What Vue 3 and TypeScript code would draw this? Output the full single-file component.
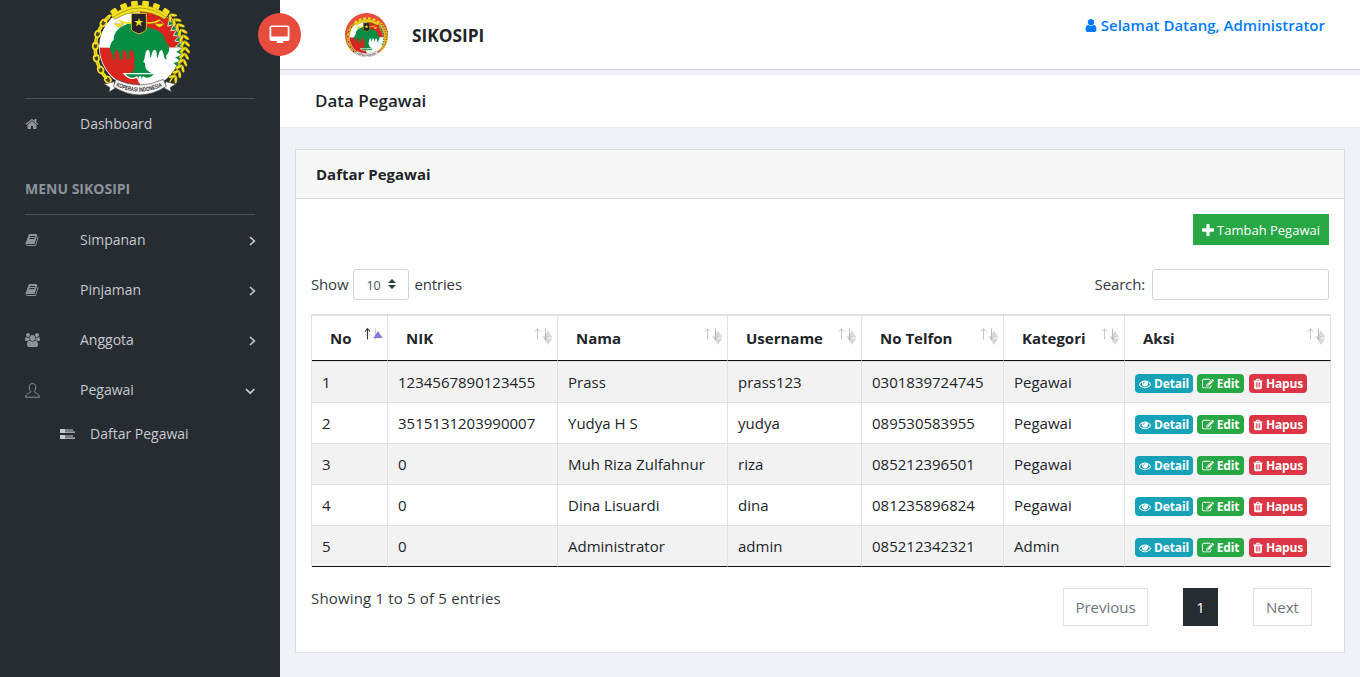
<script setup lang="ts">
interface Employee {
  no: number
  nik: string
  nama: string
  username: string
  telfon: string
  kategori: string
}

const columns: string[] = ['No', 'NIK', 'Nama', 'Username', 'No Telfon', 'Kategori', 'Aksi']

const employees: Employee[] = [
  { no: 1, nik: '1234567890123455', nama: 'Prass', username: 'prass123', telfon: '0301839724745', kategori: 'Pegawai' },
  { no: 2, nik: '3515131203990007', nama: 'Yudya H S', username: 'yudya', telfon: '089530583955', kategori: 'Pegawai' },
  { no: 3, nik: '0', nama: 'Muh Riza Zulfahnur', username: 'riza', telfon: '085212396501', kategori: 'Pegawai' },
  { no: 4, nik: '0', nama: 'Dina Lisuardi', username: 'dina', telfon: '081235896824', kategori: 'Pegawai' },
  { no: 5, nik: '0', nama: 'Administrator', username: 'admin', telfon: '085212342321', kategori: 'Admin' },
]

const icons = {
  home: 'M1472 992v480q0 26-19 45t-45 19h-384v-384h-256v384h-384q-26 0-45-19t-19-45v-480q0-1 .5-3t.5-3l575-474 575 474q1 2 1 6zm223-69l-62 74q-8 9-21 11h-3q-13 0-21-7l-692-577-692 577q-12 8-24 7-13-2-21-11l-62-74q-8-10-7-23.5t11-21.5l719-599q32-26 76-26t76 26l244 204v-195q0-14 9-23t23-9h192q14 0 23 9t9 23v408l219 182q10 8 11 21.5t-7 23.5z',
  book: 'M1703 478q40 57 18 129l-275 906q-19 64-76.5 107.5t-122.5 43.5h-923q-77 0-148.5-53.5t-99.5-131.5q-24-67-2-127 0-4 3-27t4-37q1-8-3-21.5t-3-19.5q2-11 8-21t16.5-23.5 16.5-23.5q23-38 45-91.5t30-91.5q3-10 .5-30t-.5-28q3-11 17-28t17-23q21-36 42-92t25-90q1-9-2.5-32t.5-28q4-13 22-30.5t22-22.5q19-26 42.5-84.5t27.5-96.5q1-8-3-25.5t-2-26.5q2-8 9-18t18-23 17-21q8-12 16.5-30.5t15-35 16-36 19.5-32 26.5-23.5 36-11.5 47.5 5.5l-1 3q38-9 51-9h761q74 0 114 56t18 130l-274 906q-36 119-71.500 153.500t-128.500 34.500h-869q-27 0-38 15-11 16-1 43 24 70 144 70h923q29 0 56-15.500t35-41.500l300-987q7-22 5-57 38 15 59 43zm-1064 2q-4 13 2 22.500t20 9.500h608q13 0 25.500-9.500t16.500-22.500l21-64q4-13-2-22.500t-20-9.500h-608q-13 0-25.500 9.500t-16.500 22.500zm-83 256q-4 13 2 22.500t20 9.500h608q13 0 25.500-9.500t16.500-22.500l21-64q4-13-2-22.500t-20-9.500h-608q-13 0-25.500 9.500t-16.500 22.500z',
  users: 'M529 896q-162 5-265 128h-134q-82 0-138-40.5t-56-118.500q0-353 124-353 6 0 43.500 21t97.500 42.500 119 21.500q67 0 133-23-5 37-5 66 0 139 81 256zm1071 637q0 120-73 189.500t-194 69.500h-874q-121 0-194-69.500t-73-189.500q0-53 3.500-103.500t14-109 26.500-108.500 43-97.500 62-81 85.500-53.500 111.500-20q10 0 43 21.500t73 48 107 48 135 21.500 135-21.500 107-48 73-48 43-21.500q61 0 111.500 20t85.500 53.500 62 81 43 97.500 26.500 108.500 14 109 3.500 103.500zm-1024-1277q0 106-75 181t-181 75-181-75-75-181 75-181 181-75 181 75 75 181zm704 384q0 159-112.500 271.500t-271.500 112.500-271.500-112.500-112.500-271.500 112.500-271.500 271.500-112.500 271.500 112.500 112.500 271.500zm576 225q0 78-56 118.500t-138 40.500h-134q-103-123-265-128 81-117 81-256 0-29-5-66 66 23 133 23 59 0 119-21.500t97.500-42.500 43.500-21q124 0 124 353zm-128-609q0 106-75 181t-181 75-181-75-75-181 75-181 181-75 181 75 75 181z',
  user: 'M1536 1399q0 109-62.500 187t-150.500 78h-854q-88 0-150.500-78t-62.500-187q0-85 8.500-160.500t31.500-152 58.500-131 94-89 134.500-34.500q131 128 313 128t313-128q76 0 134.500 34.500t94 89 58.500 131 31.500 152 8.500 160.500zm-256-887q0 159-112.500 271.500t-271.500 112.500-271.500-112.500-112.500-271.500 112.500-271.500 271.500-112.500 271.500 112.500 112.500 271.500z',
  plus: 'M1600 736v192q0 40-28 68t-68 28h-416v416q0 40-28 68t-68 28h-192q-40 0-68-28t-28-68v-416h-416q-40 0-68-28t-28-68v-192q0-40 28-68t68-28h416v-416q0-40 28-68t68-28h192q40 0 68 28t28 68v416h416q40 0 68 28t28 68z',
  eye: 'M1664 960q-152-236-381-353 61 104 61 225 0 185-131.5 316.5t-316.5 131.5-316.5-131.5-131.5-316.5q0-121 61-225-229 117-381 353 133 205 333.500 326.500t434.500 121.500 434.500-121.500 333.500-326.500zm-720-384q0-20-14-34t-34-14q-125 0-214.500 89.500t-89.500 214.500q0 20 14 34t34 14 34-14 14-34q0-86 61-147t147-61q20 0 34-14t14-34zm848 384q0 34-20 69-140 230-376.500 368.500t-499.500 138.500-499.500-139-376.500-368q-20-35-20-69t20-69q140-229 376.500-368t499.500-139 499.500 139 376.500 368q20 35 20 69z',
  edit: 'M888 1184l116-116-152-152-116 116v56h96v96h56zm440-720q-16-16-33 1l-350 350q-17 17-1 33t33-1l350-350q17-17 1-33zm80 594v190q0 119-84.500 203.500t-203.500 84.500h-832q-119 0-203.500-84.500t-84.500-203.500v-832q0-119 84.500-203.500t203.500-84.500h832q63 0 117 25 15 7 18 23 3 17-9 29l-49 49q-14 14-32 8-23-6-45-6h-832q-66 0-113 47t-47 113v832q0 66 47 113t113 47h832q66 0 113-47t47-113v-126q0-13 9-22l64-64q15-15 35-7t20 29zm-96-738l288 288-672 672h-288v-288zm444 132l-92 92-288-288 92-92q28-28 68-28t68 28l152 152q28 28 28 68t-28 68z',
  trash: 'M704 1376v-704q0-14-9-23t-23-9h-64q-14 0-23 9t-9 23v704q0 14 9 23t23 9h64q14 0 23-9t9-23zm256 0v-704q0-14-9-23t-23-9h-64q-14 0-23 9t-9 23v704q0 14 9 23t23 9h64q14 0 23-9t9-23zm256 0v-704q0-14-9-23t-23-9h-64q-14 0-23 9t-9 23v704q0 14 9 23t23 9h64q14 0 23-9t9-23zm-544-992h448l-48-117q-7-9-17-11h-317q-10 2-17 11zm928 32v64q0 14-9 23t-23 9h-96v948q0 83-47 143.500t-113 60.500h-832q-66 0-113-58.500t-47-141.500v-952h-96q-14 0-23-9t-9-23v-64q0-14 9-23t23-9h309l70-167q15-37 54-63t79-26h320q40 0 79 26t54 63l70 167h309q14 0 23 9t9 23z',
}

const menu = [
  { label: 'Simpanan', icon: icons.book },
  { label: 'Pinjaman', icon: icons.book },
]

interface Point {
  x: number
  y: number
  a: number
}

/** Points on the emblem's rim, angles in degrees clockwise from the top. */
function rim(from: number, to: number, count: number, radius: number): Point[] {
  return Array.from({ length: count }, (_, i) => {
    const a = from + ((to - from) * i) / (count - 1)
    const r = (a * Math.PI) / 180
    return { x: 180 + radius * Math.sin(r), y: 146 - radius * Math.cos(r), a }
  })
}

const teeth = rim(-35, 35, 6, 137)
const chain = rim(-134, -47, 12, 134)
const grains = rim(46, 132, 12, 135)
const cotton = rim(50, 112, 8, 117)
</script>

<template>
  <div class="page">
    <aside class="sidebar">
      <div class="brand">
        <svg class="emblem" viewBox="0 0 360 315">
          <defs>
            <clipPath id="disc"><circle cx="180" cy="142" r="121" /></clipPath>
            <path id="ribbon-line" d="M108 258 Q180 293 252 256" />
            <symbol id="koperasi" viewBox="0 0 360 315">
              <circle cx="180" cy="143" r="123" fill="#fff" />
              <g clip-path="url(#disc)">
                <rect x="50" y="15" width="130" height="128" fill="#fff" />
                <rect x="180" y="15" width="135" height="128" fill="#d8251d" />
                <rect x="50" y="143" width="130" height="128" fill="#d8251d" />
                <rect x="180" y="143" width="135" height="128" fill="#fff" />
              </g>
              <path d="M92 46 Q180 -16 264 46 L254 58 Q180 12 105 58 Z" fill="#f4e11b" stroke="#5b5620" stroke-width="1.5" />
              <path d="M101 51 Q180 -3 257 51" fill="none" stroke="#8d8420" stroke-width="2" />
              <rect v-for="(t, i) in teeth" :key="'t' + i" :x="t.x - 10" :y="t.y - 7" width="20" height="15" rx="3" fill="#f4e11b" :transform="`rotate(${t.a} ${t.x} ${t.y})`" />
              <ellipse v-for="(c, i) in chain" :key="'c' + i" :cx="c.x" :cy="c.y" :rx="i % 2 ? 12 : 10" :ry="i % 2 ? 3 : 8" fill="#4a4524" stroke="#f4e11b" stroke-width="5" :transform="`rotate(${c.a} ${c.x} ${c.y})`" />
              <path v-for="(g, i) in cotton" :key="'w' + i" d="M-10 -6 L10 -10 L2 10 Z" fill="#078d43" stroke="#fff" stroke-width="2" :transform="`translate(${g.x} ${g.y}) rotate(${g.a})`" />
              <path d="M271 50 Q346 142 269 246" fill="none" stroke="#f4e11b" stroke-width="4" />
              <g v-for="(g, i) in grains" :key="'g' + i" :transform="`translate(${g.x} ${g.y}) rotate(${g.a})`">
                <ellipse cx="2" cy="-7" rx="12" ry="4.500" fill="#f4e11b" stroke="#4d491b" stroke-width="1" transform="rotate(-40)" />
                <ellipse cx="-2" cy="-7" rx="12" ry="4.500" fill="#f4e11b" stroke="#4d491b" stroke-width="1" transform="rotate(-140)" />
              </g>
              <path d="M150 70 C124 76 100 94 101 120 C87 132 86 151 99 164 C96 184 111 196 119 188 C128 202 140 190 145 187 C156 204 159 194 163 188 C168 209 157 217 144 220 H218 C203 215 191 206 197 186 C204 194 210 185 214 184 C225 200 235 191 241 183 C255 191 263 181 258 167 C272 156 270 134 257 127 C256 103 237 88 208 84 L194 76 Z" fill="#078d43" />
              <path d="M105 184 C106 169 101 155 110 149 C119 150 118 169 121 187 Z M128 186 C128 167 125 153 134 149 C142 153 140 169 143 186 Z M149 184 C147 167 145 153 154 149 C164 155 160 171 165 184 Z M99 178 H166 L160 192 Q148 202 142 192 Q130 202 122 192 Q108 196 99 178Z" fill="#d8251d" />
              <path d="M190 185 C197 171 194 153 203 149 C213 153 208 163 211 174 C216 165 215 152 224 149 C233 153 228 164 232 174 C237 166 236 153 244 149 C253 155 248 171 259 180 L248 198 H202 Z" fill="#fff" />
              <path d="M132 221 H226 Q207 243 190 231 L181 248 L170 231 Q151 243 132 221Z" fill="#078d43" stroke="#fff" stroke-width="4" />
              <ellipse cx="180" cy="239" rx="5" ry="11" fill="#fff" />
              <path d="M119 63 Q150 77 178 61 Q209 77 239 61" fill="none" stroke="#f4e11b" stroke-width="5" />
              <path d="M105 73 L117 59 L130 73 M225 73 L239 59 L252 73" fill="none" stroke="#d9c416" stroke-width="2" />
              <path d="M103 71 H131 Q117 92 103 71Z M225 71 H252 Q238 92 225 71Z" fill="#f4e11b" stroke="#877b16" />
              <path d="M154 40 H199 V87 Q198 94 177 102 Q155 94 154 87Z" fill="#272525" stroke="#d6c222" stroke-width="3" />
              <path d="M177 53 L180 63 L190 63 L182 69 L185 79 L177 73 L168 79 L171 69 L163 63 L174 63Z" fill="#f4e11b" />
              <path d="M73 252 L102 245 L105 265 L87 276 L90 263Z M287 252 L257 245 L254 265 L274 275 L270 263Z" fill="#fff" stroke="#504d4d" stroke-width="2" />
              <path d="M108 238 Q180 272 250 238 L259 259 Q180 310 100 260Z" fill="#f5f4f4" stroke="#504d4d" stroke-width="2" />
              <text font-family="Liberation Sans, sans-serif" font-size="18" font-weight="700" fill="#343030"><textPath href="#ribbon-line" textLength="144" lengthAdjust="spacingAndGlyphs">KOPERASI INDONESIA</textPath></text>
            </symbol>
          </defs>
          <use href="#koperasi" width="360" height="315" />
        </svg>
      </div>
      <nav class="nav">
        <a class="item">
          <svg class="fa" viewBox="0 0 1792 1792"><path :d="icons.home" /></svg>
          <span>Dashboard</span>
        </a>
        <h3>MENU SIKOSIPI</h3>
        <a v-for="m in menu" :key="m.label" class="item">
          <svg class="fa" viewBox="0 0 1792 1792"><path :d="m.icon" /></svg>
          <span>{{ m.label }}</span>
          <svg class="chev" viewBox="0 0 12 12"><path d="M4 2 L8.300 6 L4 10" /></svg>
        </a>
        <a class="item">
          <svg class="fa wide" viewBox="-64 0 1920 1792"><path :d="icons.users" /></svg>
          <span>Anggota</span>
          <svg class="chev" viewBox="0 0 12 12"><path d="M4 2 L8.300 6 L4 10" /></svg>
        </a>
        <a class="item">
          <svg class="line-user" viewBox="0 0 15 15"><path d="M5.800 8.700 C3.500 6 3.500 .6 7.500 .6 C11.500 .6 11.500 6 9.200 8.700 C9 10 14 9.800 14.400 14.200 H.6 C1 9.800 6 10 5.800 8.700Z" /></svg>
          <span>Pegawai</span>
          <svg class="chev down" viewBox="0 0 12 12"><path d="M2 4 L6.200 8.200 L10.400 4" /></svg>
        </a>
        <a class="sub">
          <svg viewBox="0 0 15 12"><path d="M0 1h5v4H0zM0 7h5v4H0zM5 1.500h8v1H5zM5 3.500h10v1.200H5zM5 7.500h8v1H5zM5 9.500h10v1.200H5z" /></svg>
          <span>Daftar Pegawai</span>
        </a>
      </nav>
    </aside>

    <div class="content">
      <header class="topbar">
        <button class="toggle" type="button">
          <svg viewBox="0 0 22 19"><path d="M2.600 .5 H18.400 Q20.500 .5 20.500 2.500 V14 Q20.500 16 18.400 16 H14 V17 L15 18 H7 L8 17 V16 H2.600 Q.5 16 .5 14 V2.500 Q.5 .5 2.600 .5Z M2.300 2 V11.500 H18.700 V2Z" fill-rule="evenodd" /></svg>
        </button>
        <div class="logo"><svg viewBox="0 0 360 315"><use href="#koperasi" width="360" height="315" /></svg></div>
        <strong class="title">SIKOSIPI</strong>
        <a class="welcome">
          <svg viewBox="256 128 1280 1536"><path :d="icons.user" /></svg>
          <span>Selamat Datang, Administrator</span>
        </a>
      </header>
      <div class="crumbs"><h1>Data Pegawai</h1></div>

      <section class="card">
        <div class="card-head"><strong>Daftar Pegawai</strong></div>
        <div class="card-body">
          <div class="actions">
            <button class="add" type="button">
              <svg viewBox="192 128 1408 1408"><path :d="icons.plus" /></svg>
              <span>Tambah Pegawai</span>
            </button>
          </div>
          <div class="filters">
            <div class="length">
              <span>Show</span>
              <div class="select">
                <span>10</span>
                <svg viewBox="0 0 8 10"><path d="M0 4 L4 0 L8 4Z M0 6 H8 L4 10Z" /></svg>
              </div>
              <span>entries</span>
            </div>
            <label class="search"><span>Search:</span><input type="text" /></label>
          </div>
          <table>
            <colgroup><col v-for="c in columns" :key="c" :class="'c-' + c.replace(' ', '').toLowerCase()" /></colgroup>
            <thead>
              <tr>
                <th v-for="(c, i) in columns" :key="c">
                  <div class="th">
                    <span>{{ c }}</span>
                    <svg v-if="i === 0" class="sort" viewBox="0 0 20 20">
                      <path d="M3.500 14.500 V4 M1 6.500 L3.500 3.500 L6 6.500" fill="none" stroke="#343a40" stroke-width="1.100" />
                      <path d="M11.500 3.500 V14 M9 12 L11.500 14.500" fill="none" stroke="#cfcfcf" />
                      <path d="M9.500 13 L14 6 L18.500 13Z" fill="#7a7fde" />
                    </svg>
                    <svg v-else class="sort" viewBox="0 0 20 20">
                      <path d="M3.500 14.500 V4 M1 6.500 L3.500 3.500 L6 6.500" fill="none" stroke="#c7c7c7" />
                      <path d="M9.500 12.500 L14 5.500 L18.500 12.500Z M9.800 13.500 H18.200 L14 20Z" fill="#d8d8d8" />
                      <path d="M11.500 3.500 V14.500 M9 11.500 L11.500 14.500 L14 11.500" fill="none" stroke="#b9b9b9" />
                    </svg>
                  </div>
                </th>
              </tr>
            </thead>
            <tbody>
              <tr v-for="e in employees" :key="e.no">
                <td>{{ e.no }}</td>
                <td>{{ e.nik }}</td>
                <td>{{ e.nama }}</td>
                <td>{{ e.username }}</td>
                <td>{{ e.telfon }}</td>
                <td>{{ e.kategori }}</td>
                <td>
                  <div class="badges">
                    <a class="badge detail"><svg viewBox="0 0 1792 1792"><path :d="icons.eye" /></svg><span>Detail</span></a>
                    <a class="badge edit"><svg viewBox="0 0 1792 1792"><path :d="icons.edit" /></svg><span>Edit</span></a>
                    <a class="badge hapus"><svg viewBox="192 0 1408 1792"><path :d="icons.trash" /></svg><span>Hapus</span></a>
                  </div>
                </td>
              </tr>
            </tbody>
          </table>
          <div class="foot">
            <span class="info">Showing 1 to 5 of 5 entries</span>
            <div class="pager">
              <a class="prev">Previous</a>
              <a class="current">1</a>
              <a class="next">Next</a>
            </div>
          </div>
        </div>
      </section>
    </div>
  </div>
</template>

<style>
body {
  background: #f1f2f7;
  overflow: hidden;
}
</style>

<style scoped>
* {
  box-sizing: border-box;
}
.page {
  display: flex;
  height: 677px;
  font-family: 'Open Sans', 'Noto Sans', sans-serif;
  font-size: 15px;
  color: #212529;
  background: #f1f2f7;
}
.sidebar {
  width: 280px;
  padding: 0 25px;
  background: #272c33;
  flex: none;
}
.brand {
  height: 99px;
  border-bottom: 1px solid #4e4e52;
  display: flex;
  justify-content: center;
}
.emblem {
  width: 120px;
  height: 105px;
  flex: none;
  overflow: visible;
}
.nav {
  font-size: 14px;
  color: #c8c9ce;
}
.item {
  height: 50px;
  display: flex;
  align-items: center;
}
.item span {
  flex: 1;
  padding-bottom: 2px;
}
.fa {
  width: 14px;
  height: 14px;
  margin-right: 41px;
  fill: #8b939b;
}
.fa.wide {
  width: 15px;
  margin-right: 40px;
}
.line-user {
  width: 15px;
  height: 15px;
  margin-right: 40px;
  fill: none;
  stroke: #8b939b;
}
.chev {
  width: 12px;
  height: 12px;
  margin: 1px -3px 0 0;
  fill: none;
  stroke: #c8c9ce;
  stroke-width: 1.7;
}
.chev.down {
  margin-right: -1px;
}
h3 {
  margin: 25px 0 0;
  height: 41px;
  padding-top: 5px;
  font-size: 14px;
  line-height: 20px;
  font-weight: 700;
  color: #8b939b;
  border-bottom: 1px solid #4e4e52;
}
.sub {
  display: flex;
  align-items: center;
  height: 38px;
  padding-left: 35px;
}
.sub span {
  padding-bottom: 2px;
}
.sub svg {
  width: 15px;
  height: 12px;
  margin: -1px 15px 0 0;
  fill: #c8c9ce;
}
.content {
  flex: 1;
  min-width: 0;
}
.topbar {
  position: relative;
  height: 70px;
  background: #fff;
  border-bottom: 1px solid #d0d1d6;
  display: flex;
  align-items: center;
  padding: 0 35px 0 65px;
}
.toggle {
  position: absolute;
  left: -22px;
  top: 13px;
  width: 43px;
  height: 43px;
  border: 0;
  padding: 0;
  border-radius: 50%;
  background: #e74c3c;
  display: flex;
  align-items: center;
  justify-content: center;
}
.toggle svg {
  width: 22px;
  height: 19px;
  fill: #fff;
}
.logo {
  width: 43px;
  height: 44px;
  margin-top: 1px;
  border-radius: 50%;
  background: #e74c3c;
  overflow: hidden;
  display: flex;
  align-items: flex-end;
  justify-content: center;
}
.logo svg {
  width: 52px;
  height: 45px;
  margin-bottom: -5px;
  flex: none;
}
.title {
  margin: 2px 0 0 24px;
  font-size: 17.300px;
  font-weight: 700;
}
.welcome {
  margin: -19px 0 0 auto;
  display: flex;
  align-items: center;
  gap: 4px;
  font-weight: 600;
  color: #007bff;
}
.welcome svg {
  width: 12px;
  height: 13px;
  fill: currentColor;
}
.crumbs {
  margin-top: 5px;
  height: 52px;
  padding: 0 35px 2px;
  background: #fff;
  display: flex;
  align-items: center;
}
h1 {
  margin: 0;
  font-size: 17px;
  font-weight: 600;
}
.card {
  margin: 22px 15px 0;
  height: 504px;
  background: #fff;
  border: 1px solid #dcdde0;
}
.card-head {
  height: 49px;
  padding-left: 20px;
  background: #f7f7f7;
  border-bottom: 1px solid #d9dadc;
  display: flex;
  align-items: center;
}
.card-body {
  padding: 15px;
}
.actions {
  display: flex;
  justify-content: flex-end;
}
.add {
  width: 136px;
  height: 31px;
  border: 0;
  padding: 0;
  background: #28a745;
  color: #fff;
  font: 13px 'Open Sans', sans-serif;
  display: flex;
  align-items: center;
  justify-content: center;
  gap: 3px;
}
.add svg {
  width: 12px;
  height: 12px;
  fill: #fff;
}
.filters {
  margin-top: 24px;
  height: 31px;
  display: flex;
  justify-content: space-between;
  letter-spacing: -0.15px;
}
.length,
.search {
  display: flex;
  align-items: center;
  color: #343a40;
}
.length {
  gap: 5px;
}
.length > span,
.search > span {
  padding-bottom: 2px;
}
.select {
  width: 56px;
  height: 31px;
  border: 1px solid #ced4da;
  border-radius: 3px;
  display: flex;
  align-items: center;
  padding: 2px 12px 0;
  font-size: 12.500px;
  color: #495057;
  justify-content: space-between;
}
.select svg {
  width: 8px;
  height: 10px;
  margin-top: -3px;
  fill: #343a40;
}
.search {
  gap: 7px;
}
input {
  width: 177px;
  height: 31px;
  border: 1px solid #ced4da;
  border-radius: 3px;
  padding: 0 8px;
  background: #fff;
}
table {
  margin-top: 14px;
  width: 1020px;
  table-layout: fixed;
  border-spacing: 0;
  border-left: 1px solid #dee2e6;
}
.c-no { width: 76px; }
.c-nik { width: 170px; }
.c-nama { width: 170px; }
.c-username { width: 134px; }
.c-notelfon { width: 142px; }
.c-kategori { width: 121px; }
.c-aksi { width: 206px; }
th {
  height: 47px;
  padding: 0 3.500px 2px 18px;
  border-top: 2px solid #dee2e6;
  border-right: 1px solid #dee2e6;
  border-bottom: 1px solid #111;
  text-align: left;
  font-weight: 700;
}
.th {
  display: flex;
  justify-content: space-between;
  align-items: center;
}
.th span {
  padding-top: 2px;
}
.sort {
  width: 20px;
  height: 20px;
  margin-top: -5px;
  flex: none;
}
td {
  height: 41px;
  padding: 0 0 0 10px;
  border-top: 1px solid #dee2e6;
  border-right: 1px solid #dee2e6;
}
tbody tr:nth-child(odd) td {
  background: #f2f2f2;
}
tbody tr:last-child td {
  height: 42px;
  border-bottom: 1px solid #111;
}
.badges {
  display: flex;
  gap: 4px;
  padding-top: 3px;
}
.badge {
  height: 19px;
  border-radius: 4px;
  color: #fff;
  font-size: 12px;
  font-weight: 700;
  letter-spacing: -0.15px;
  display: flex;
  align-items: center;
  justify-content: center;
  gap: 3px;
}
.badge svg {
  width: 12px;
  height: 12px;
  fill: #fff;
}
.detail {
  width: 58px;
  background: #17a2b8;
}
.edit {
  width: 47px;
  background: #28a745;
}
.hapus {
  width: 58px;
  margin-left: 1px;
  background: #dc3545;
}
.hapus svg {
  width: 10px;
}
.foot {
  display: flex;
  justify-content: space-between;
  padding: 21px 17px 0 0;
}
.info {
  color: #343a40;
  letter-spacing: 0.17px;
}
.pager {
  display: flex;
  gap: 35px;
  color: #6c757d;
}
.pager a {
  height: 38px;
  border: 1px solid #dee2e6;
  display: flex;
  align-items: center;
  justify-content: center;
}
.prev {
  width: 85px;
}
.pager .current {
  width: 35px;
  background: #272c33;
  border-color: #272c33;
  color: #fff;
}
.next {
  width: 59px;
}
</style>
